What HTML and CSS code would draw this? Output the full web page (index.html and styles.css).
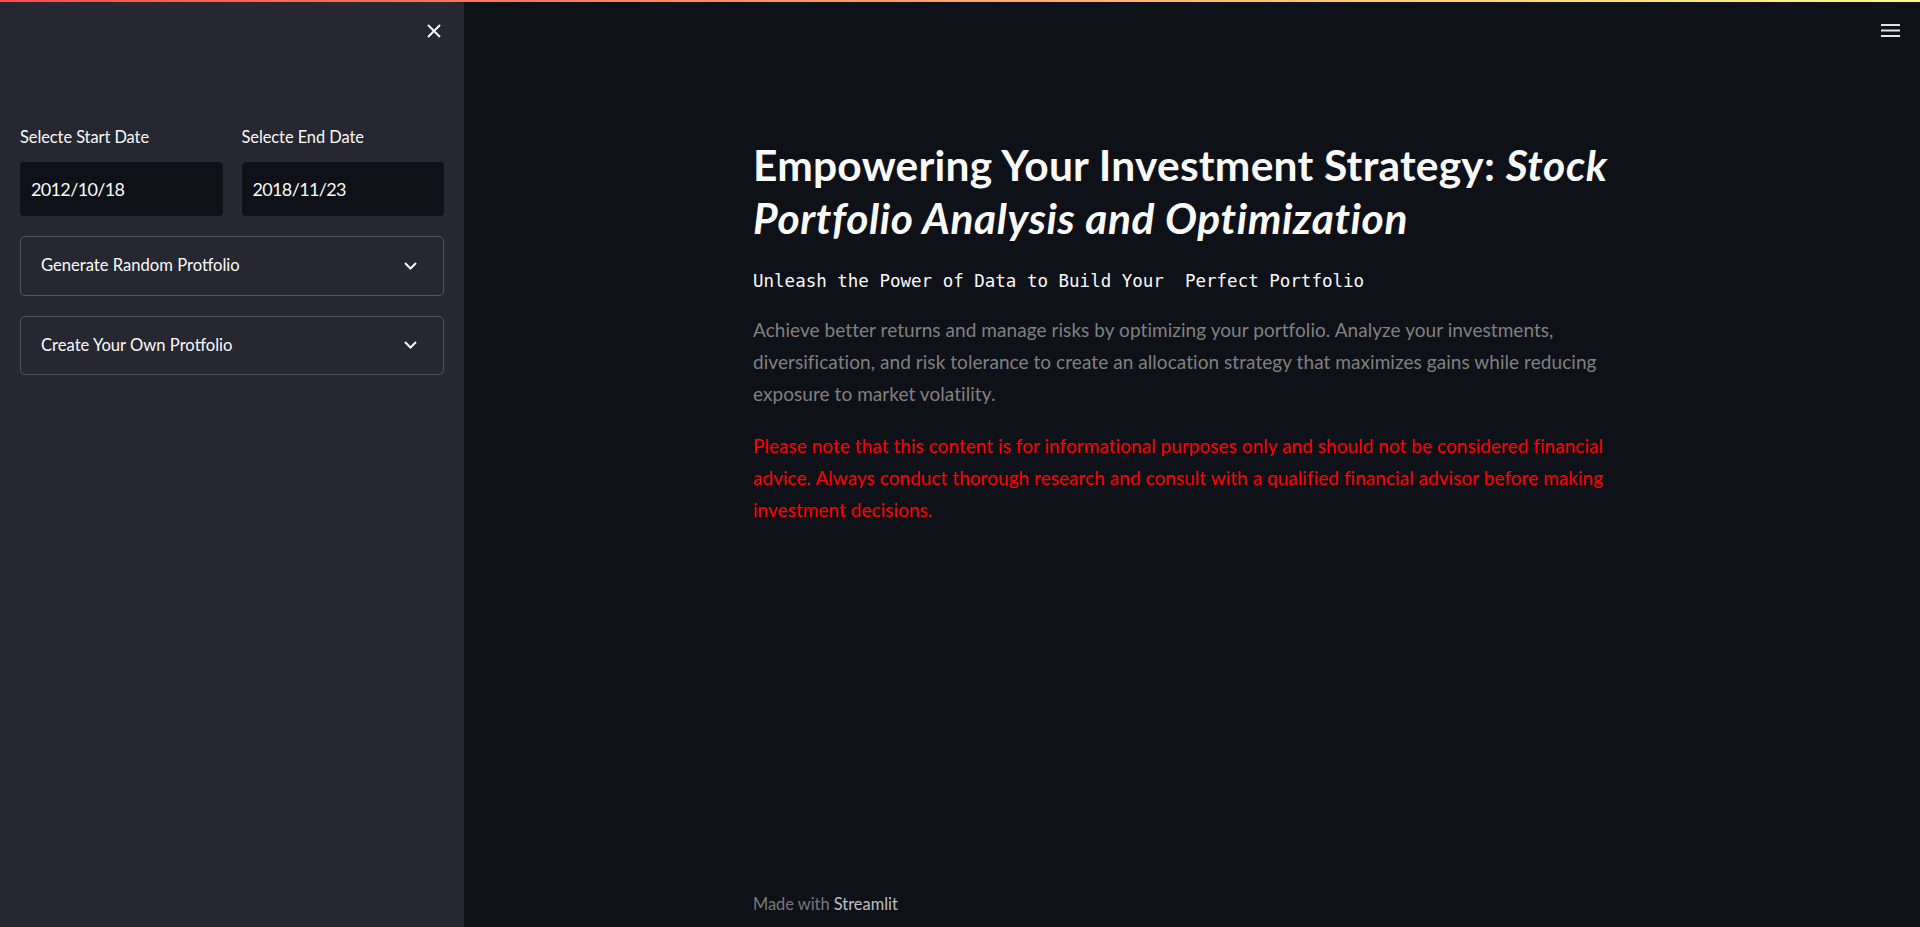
FILE: index.html
```html
<!DOCTYPE html>
<html lang="en">
<head>
<meta charset="utf-8">
<title>Stock Portfolio Analysis and Optimization</title>
<link rel="stylesheet" href="styles.css">
</head>
<body>
<div class="decoration"></div>
<div class="app">
  <aside class="sidebar">
    <div class="sidebar-head">
      <button class="icon-btn close-btn" aria-label="Close sidebar">
        <svg width="14" height="14" viewBox="0 0 14 14"><path d="M1 1 L13 13 M13 1 L1 13" stroke="#fafafa" stroke-width="2" fill="none"/></svg>
      </button>
    </div>
    <div class="sidebar-body">
      <div class="date-row">
        <div class="field">
          <label class="field-label">Selecte Start Date</label>
          <div class="date-input">2012/10/18</div>
        </div>
        <div class="field">
          <label class="field-label">Selecte End Date</label>
          <div class="date-input">2018/11/23</div>
        </div>
      </div>
      <div class="expander">
        <span class="expander-title">Generate Random Protfolio</span>
        <svg class="chevron" width="13" height="8" viewBox="0 0 13 8"><polyline points="1,1 6.5,6.5 12,1" stroke="#fafafa" stroke-width="2" fill="none"/></svg>
      </div>
      <div class="expander">
        <span class="expander-title">Create Your Own Protfolio</span>
        <svg class="chevron" width="13" height="8" viewBox="0 0 13 8"><polyline points="1,1 6.5,6.5 12,1" stroke="#fafafa" stroke-width="2" fill="none"/></svg>
      </div>
    </div>
  </aside>
  <main class="main">
    <header class="main-head">
      <button class="icon-btn menu-btn" aria-label="Menu">
        <svg width="19" height="13" viewBox="0 0 19 13"><rect x="0" y="0" width="19" height="2" fill="#e4e4e6"/><rect x="0" y="5.5" width="19" height="2" fill="#e4e4e6"/><rect x="0" y="11" width="19" height="2" fill="#e4e4e6"/></svg>
      </button>
    </header>
    <section class="content">
      <h1 class="title">Empowering Your Investment Strategy: <em class="title-em">Stock Portfolio Analysis and Optimization</em></h1>
      <p class="subtitle">Unleash the Power of Data to Build Your  Perfect Portfolio</p>
      <p class="lead">Achieve better returns and manage risks by optimizing your portfolio. Analyze your investments, diversification, and risk tolerance to create an allocation strategy that maximizes gains while reducing exposure to market volatility.</p>
      <p class="warning">Please note that this content is for informational purposes only and should not be considered financial advice. Always conduct thorough research and consult with a qualified financial advisor before making investment decisions.</p>
    </section>
    <footer class="footer">Made with <span class="footer-brand">Streamlit</span></footer>
  </main>
</div>
</body>
</html>
```
FILE: styles.css
```css
* { box-sizing: border-box; }
html, body { margin: 0; padding: 0; }
body {
  background: #0e1117;
  color: #fafafa;
  font-family: "Lato", "Liberation Sans", sans-serif;
  height: 927px;
  overflow: hidden;
}
.decoration {
  position: fixed;
  top: 0; left: 0; right: 0;
  height: 2px;
  background: linear-gradient(90deg, rgb(255, 75, 75), rgb(255, 253, 128));
  z-index: 10;
}
.app {
  display: flex;
  height: 927px;
}
.icon-btn {
  background: none;
  border: 0;
  padding: 0;
  margin: 0;
  display: flex;
  cursor: pointer;
}

/* Sidebar */
.sidebar {
  width: 464px;
  flex: 0 0 464px;
  background: #262730;
  display: flex;
  flex-direction: column;
}
.sidebar-head {
  display: flex;
  justify-content: flex-end;
  padding: 24px 23px 0 0;
  height: 125px;
}
.sidebar-body {
  padding: 0 20px;
  display: flex;
  flex-direction: column;
  gap: 20px;
}
.date-row {
  display: flex;
  gap: 19px;
}
.field {
  flex: 1;
  display: flex;
  flex-direction: column;
  gap: 13px;
}
.field-label {
  font-size: 16.4px;
  line-height: 24px;
  letter-spacing: -0.05px;
  color: #fafafa;
}
.date-input {
  height: 54px;
  background: #0e1117;
  border-radius: 4px;
  display: flex;
  align-items: center;
  padding-left: 11px;
  font-size: 18px;
  letter-spacing: -0.65px;
  color: #fafafa;
}
.expander {
  height: 59.5px;
  border: 1px solid rgba(250, 250, 250, 0.2);
  border-radius: 5px;
  display: flex;
  align-items: center;
  justify-content: space-between;
  padding: 0 26px 0 20px;
}
.expander-title {
  font-size: 16.6px;
  line-height: 24px;
  color: #fafafa;
  position: relative;
  top: -0.5px;
}
.chevron { flex: 0 0 auto; }

/* Main */
.main {
  flex: 1;
  display: flex;
  flex-direction: column;
  min-width: 0;
}
.main-head {
  height: 60px;
  display: flex;
  justify-content: flex-end;
  align-items: flex-start;
  padding: 24px 20px 0 0;
}
.content {
  width: 878px;
  margin: 79px auto 0;
  flex: 1;
}
.title {
  margin: 0;
  font-size: 42.5px;
  line-height: 52.7px;
  font-weight: 700;
  color: #fafafa;
  letter-spacing: 0.22px;
}
.title-em {
  font-style: italic;
  letter-spacing: 0.6px;
}
.subtitle {
  margin: 23px 0 0;
  font-family: "DejaVu Sans Mono", "Liberation Mono", monospace;
  font-size: 17.5px;
  line-height: 28px;
  white-space: pre;
  color: #fafafa;
}
.lead {
  margin: 19px 0 0;
  font-size: 19px;
  line-height: 32px;
  letter-spacing: 0.06px;
  color: #808080;
}
.warning {
  margin: 20px 0 0;
  font-size: 19px;
  line-height: 32px;
  letter-spacing: 0.04px;
  color: #ff0000;
}
.footer {
  width: 878px;
  margin: 0 auto;
  padding: 0 0 11px;
  font-size: 16.4px;
  line-height: 24px;
  color: rgba(250, 250, 250, 0.45);
}
.footer-brand {
  color: rgba(250, 250, 250, 0.75);
}
```
